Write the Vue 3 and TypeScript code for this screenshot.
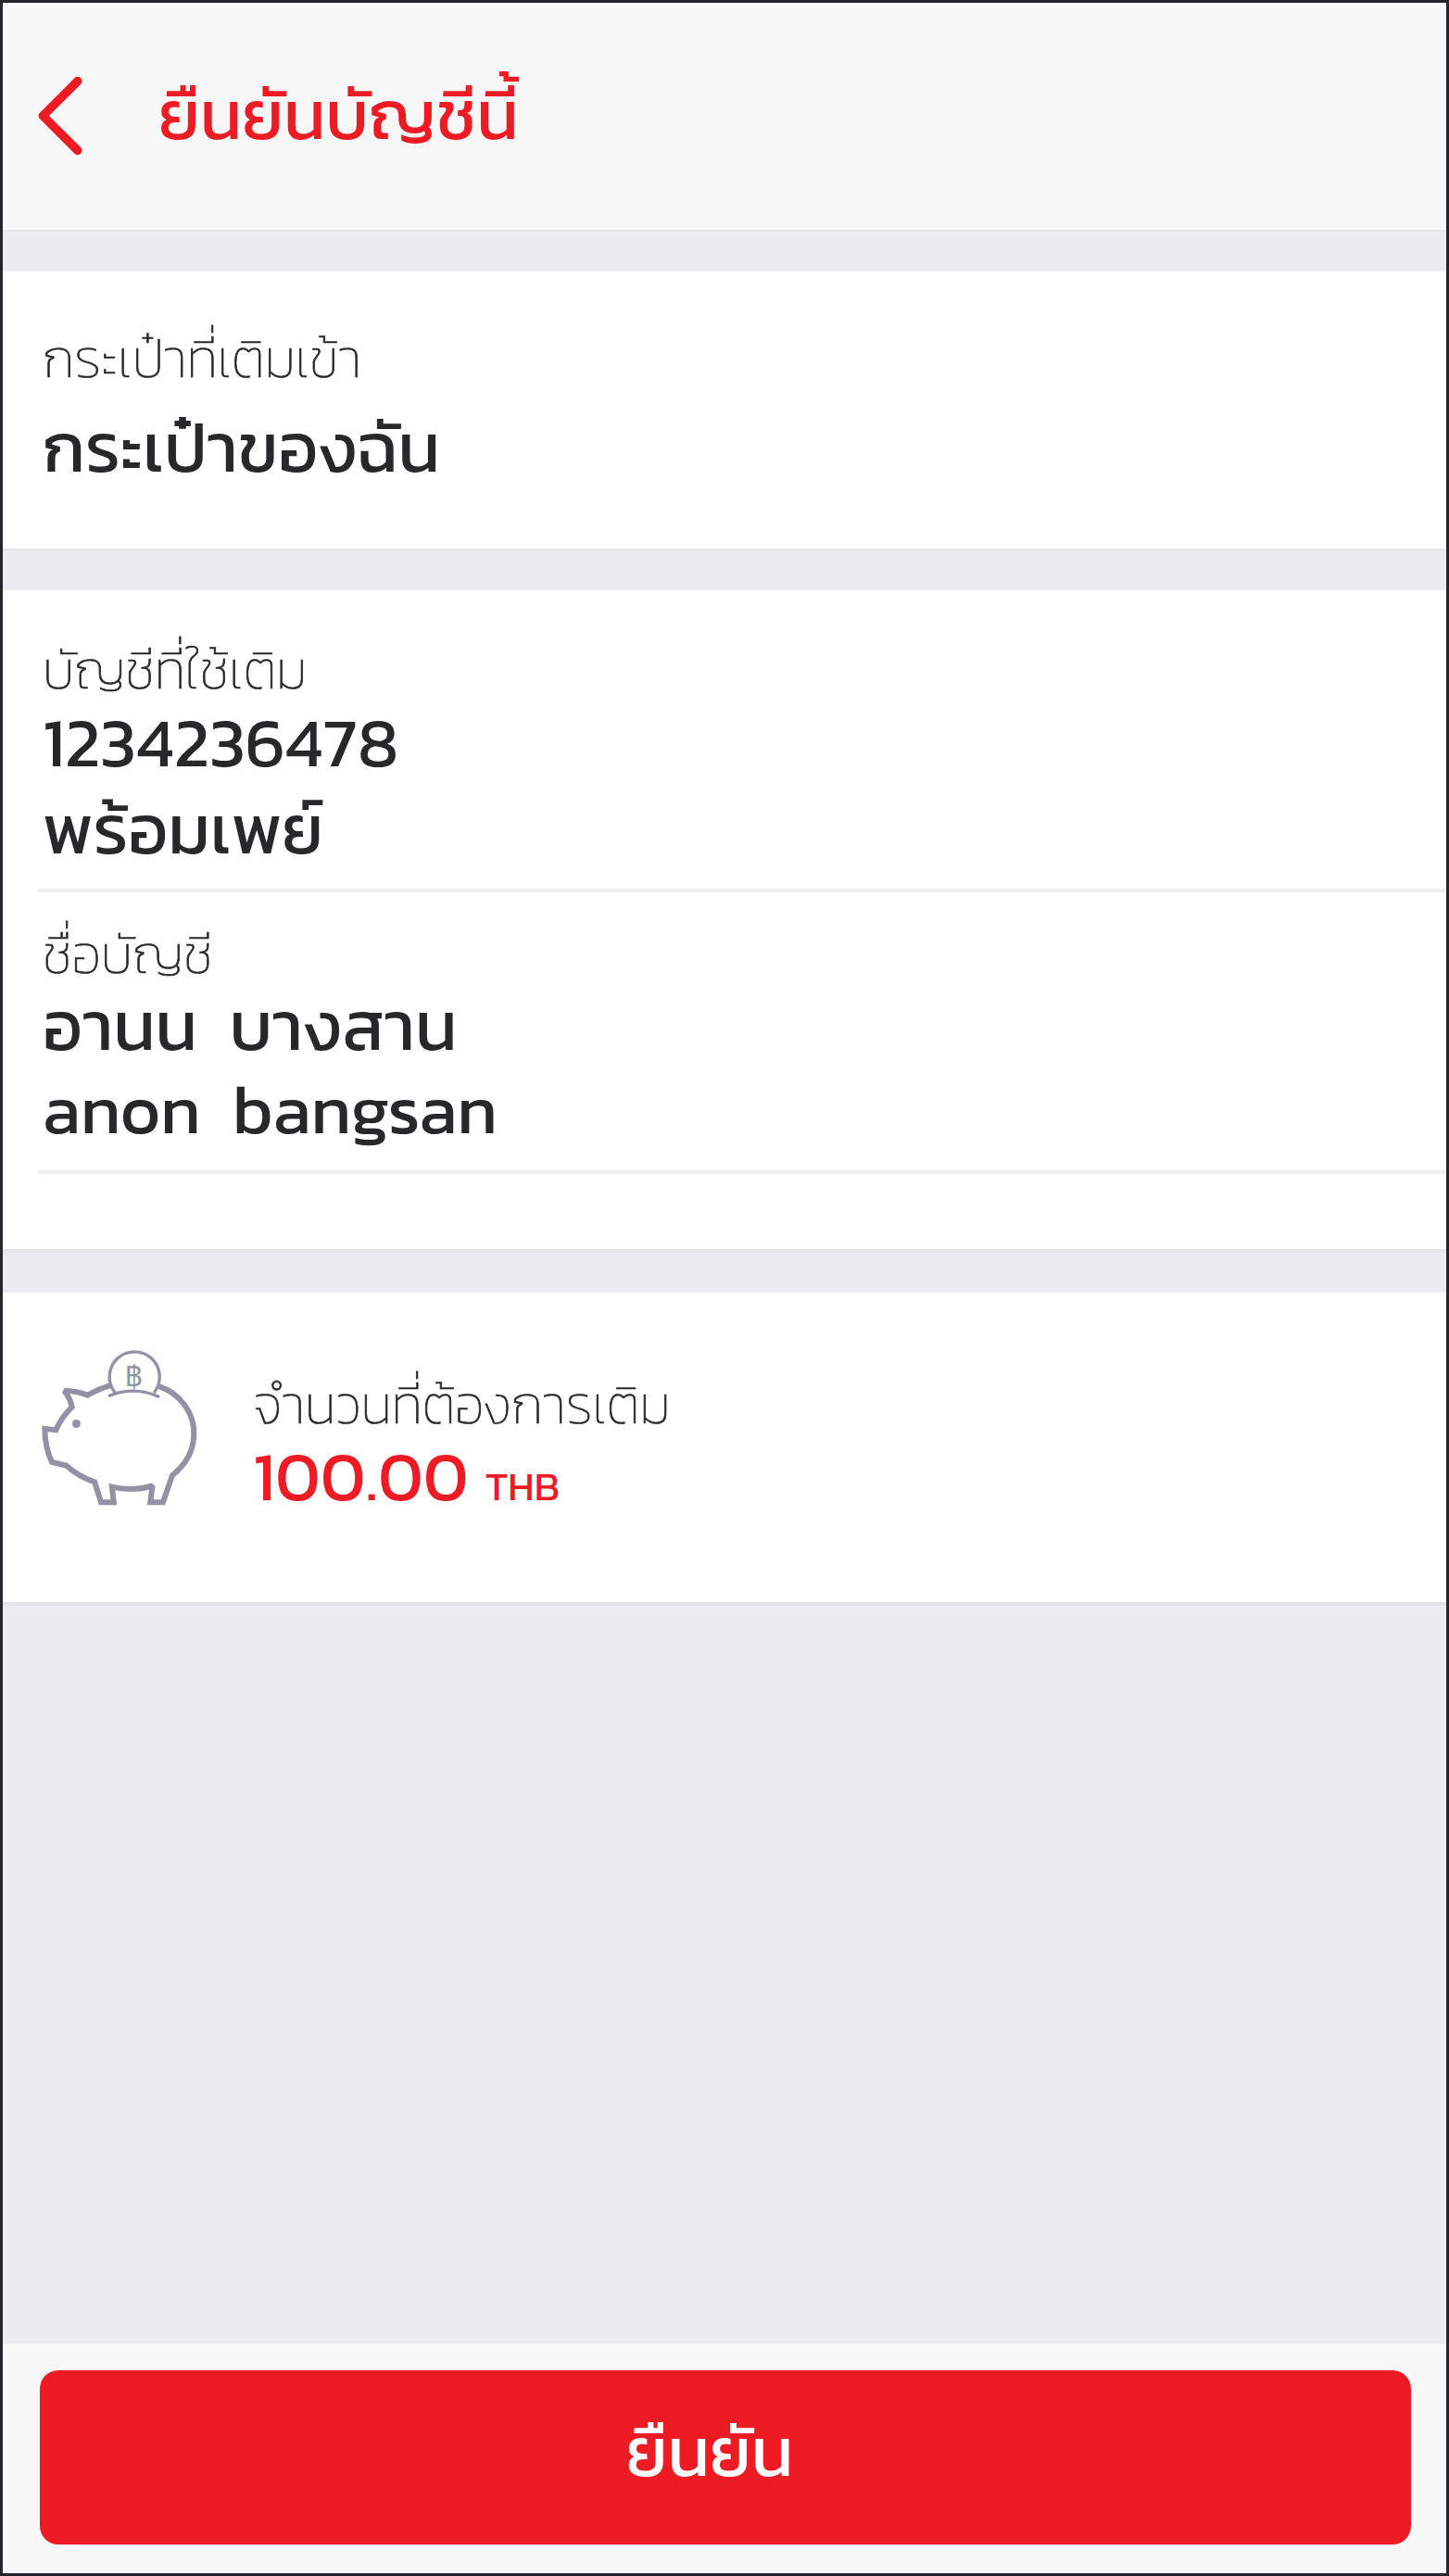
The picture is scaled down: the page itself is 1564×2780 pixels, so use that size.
<script setup lang="ts">
interface Field {
  label: string
  values: string[]
}

const wallet: Field = { label: 'กระเป๋าที่เติมเข้า', values: ['กระเป๋าของฉัน'] }

const account: Field[] = [
  { label: 'บัญชีที่ใช้เติม', values: ['1234236478', 'พร้อมเพย์'] },
  { label: 'ชื่อบัญชี', values: ['อานน  บางสาน', 'anon  bangsan'] },
]

const amount = { label: 'จำนวนที่ต้องการเติม', value: '100.00', currency: 'THB' }
</script>

<template>
  <div class="screen">
    <header class="header">
      <svg class="back" viewBox="0 0 50 88" fill="none">
        <path d="M43.8 5.6 L6.3 43 L43.8 80.4" />
      </svg>
      <h1 class="title">ยืนยันบัญชีนี้</h1>
    </header>

    <section class="card wallet">
      <div class="label">{{ wallet.label }}</div>
      <div v-for="value in wallet.values" :key="value" class="value">{{ value }}</div>
    </section>

    <section class="card account">
      <div v-for="field in account" :key="field.label" class="field">
        <div class="label">{{ field.label }}</div>
        <div v-for="value in field.values" :key="value" class="value">{{ value }}</div>
      </div>
    </section>

    <section class="card amount">
      <svg class="pig" viewBox="70 75 515 515" fill="none">
        <path
          class="body"
          d="M300 195 Q262 205 224 227 Q190 213 149 213 Q169 238 174 265 Q139 299 122 339 L86 335 Q86 395 109 443 L155 454 Q195 490 247 507 L268 573 H309 L303 523 Q370 539 434 519 L427 573 H468 L498 486 C546 448 568 405 568 350 C568 282 522 220 455 198"
        />
        <path class="coin" d="M314 218 L309 213 A81 81 0 1 1 443 213 L439 219" />
        <path class="slot" d="M296 228 Q375 197 453 231" />
        <circle class="eye" cx="188" cy="319" r="13.5" />
        <text class="baht" x="344" y="198">B</text>
        <path class="bar" d="M375 126 V208" />
      </svg>
      <div class="amount-text">
        <div class="label">{{ amount.label }}</div>
        <div class="value sum">
          <span>{{ amount.value }}</span>
          <span class="currency">{{ amount.currency }}</span>
        </div>
      </div>
    </section>

    <footer class="footer">
      <button class="confirm" type="button">ยืนยัน</button>
    </footer>
  </div>
</template>

<style scoped>
.screen {
  box-sizing: border-box;
  width: 1564px;
  height: 2780px;
  display: flex;
  flex-direction: column;
  border: 3px solid #25262a;
  background: #ebebf0;
  color: #262829;
  font-family: Kanit, 'Noto Sans Thai', 'Noto Sans', sans-serif;
}

.header {
  box-sizing: border-box;
  height: 247px;
  margin-bottom: 43px;
  padding: 79px 0 0 37px;
  display: flex;
  align-items: flex-start;
  background: #f7f7f7;
  border-bottom: 2px solid #e5e6e5;
}

.back {
  width: 50px;
  height: 88px;
  margin-right: 81px;
}

.back path {
  stroke: #ed1c24;
  stroke-width: 9.5;
  stroke-linecap: round;
  stroke-linejoin: round;
}

.title {
  margin: 4px 0 0;
  font-size: 75px;
  font-weight: 400;
  line-height: 76px;
  color: #ed1c24;
}

.card {
  box-sizing: border-box;
  background: #fff;
  border-bottom: 4px solid #e5e5e5;
}

.label {
  font-size: 57.6px;
  font-weight: 200;
  line-height: 58px;
  white-space: pre;
  -webkit-text-stroke: 0.7px currentColor;
}

.value {
  font-size: 75px;
  font-weight: 400;
  line-height: 76px;
  white-space: pre;
}

.wallet {
  height: 301px;
  margin-bottom: 43px;
  padding: 65px 0 0 43px;
  border-bottom-width: 2px;
}

.wallet .value {
  margin-top: 29px;
}

.account {
  height: 715px;
  margin-bottom: 43px;
  padding-left: 38px;
}

.field {
  box-sizing: border-box;
  height: 326px;
  padding: 57px 0 0 5px;
  border-bottom: 4px solid #eeeeee;
}

.field + .field {
  height: 304px;
  padding-top: 38px;
}

.field .label + .value {
  margin-top: 11px;
}

.field .value + .value {
  margin-top: 18px;
}

.field + .field .label + .value {
  margin-top: 10px;
}

.field + .field .value + .value {
  margin-top: 14px;
}

.amount {
  height: 338px;
  padding: 60px 0 0 40px;
  display: flex;
  align-items: flex-start;
}

.pig {
  width: 172px;
  height: 172px;
  margin-right: 58px;
  stroke: #9391a5;
}

.body {
  stroke-width: 18;
  stroke-miterlimit: 1.75;
}

.coin {
  stroke-width: 10;
}

.slot {
  stroke-width: 10;
  stroke-linecap: round;
}

.bar {
  stroke-width: 5;
}

.eye {
  fill: #9391a5;
  stroke: none;
}

.baht {
  fill: #9391a5;
  stroke: none;
  font-family: 'Noto Sans', sans-serif;
  font-size: 90px;
}

.amount-text {
  padding-top: 32px;
}

.sum {
  display: flex;
  align-items: baseline;
  gap: 18px;
  margin-top: 10px;
  color: #ed1c24;
}

.currency {
  font-size: 43.5px;
}

.footer {
  box-sizing: border-box;
  height: 249px;
  margin-top: auto;
  padding: 29px 38px 31px 40px;
  background: #f7f7f7;
  border-top: 1px solid #e6e6e6;
}

.confirm {
  display: flex;
  box-sizing: border-box;
  width: 1480px;
  height: 188px;
  justify-content: center;
  align-items: center;
  padding: 0 34px 13px 0;
  border: 0;
  border-radius: 20px;
  background: #ed1c24;
  color: #fff;
  font: 400 75px/76px Kanit, 'Noto Sans Thai', 'Noto Sans', sans-serif;
}
</style>
